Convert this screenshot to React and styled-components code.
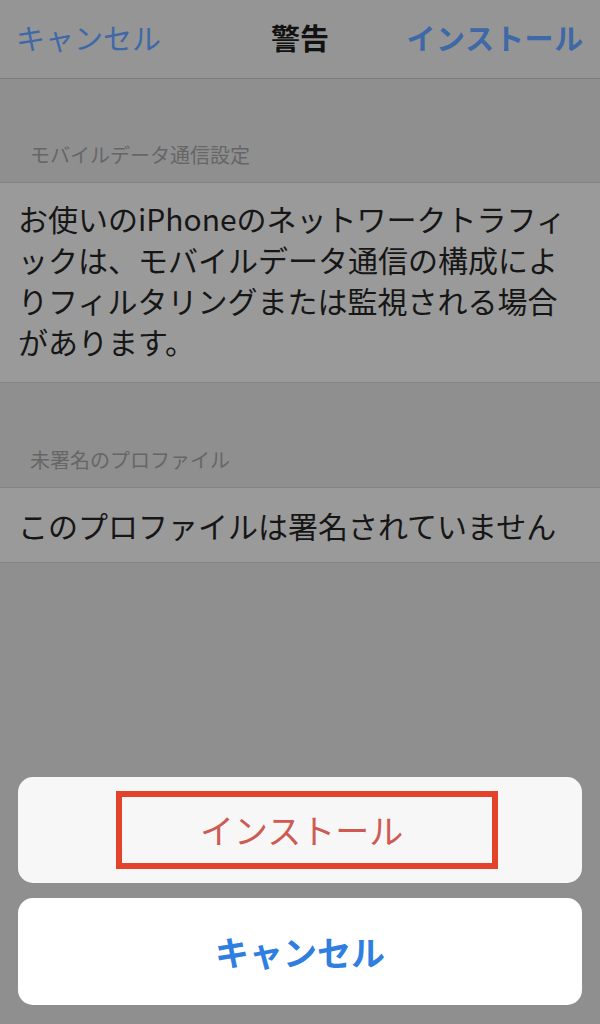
import React from "react";
import styled, { createGlobalStyle } from "styled-components";

const Global = createGlobalStyle`
  html, body { margin: 0; padding: 0; background: #8f8f90; }
  body { font-family: "Noto Sans CJK JP", "Noto Sans", sans-serif; }
  #root { min-height: 1024px; }
`;

const Page = styled.div`
  width: 600px;
  min-height: 1024px;
  display: flex;
  flex-direction: column;
  background: #8f8f90;
`;

const NavBar = styled.header`
  height: 79px;
  box-sizing: border-box;
  display: flex;
  align-items: center;
  justify-content: space-between;
  padding: 0 16px 3px 16px;
  background: #959595;
  border-bottom: 1px solid #7c7c7c;
  position: relative;
`;

const NavButton = styled.span`
  font-size: 29px;
  line-height: 1;
  color: #3f68a6;
  font-weight: ${(p) => (p.$bold ? 700 : 400)};
  letter-spacing: ${(p) => (p.$bold ? "0.7px" : "0")};
`;

const NavTitle = styled.span`
  font-size: 29px;
  line-height: 1;
  font-weight: 700;
  color: #111;
  position: absolute;
  left: 50%;
  transform: translateX(-50%);
`;

const SectionHeader = styled.div`
  padding: ${(p) => p.$top}px 30px ${(p) => p.$bottom}px;
  font-size: 20px;
  line-height: 28px;
  color: #666667;
`;

const Cell = styled.div`
  background: #9a9a9a;
  border-top: 1px solid #848484;
  border-bottom: 1px solid #848484;
  padding: ${(p) => p.$top}px 20px ${(p) => p.$bottom}px 18px;
  font-size: 30px;
  line-height: 41px;
  color: #161616;
`;

const Sheet = styled.div`
  margin-top: auto;
  padding: 0 18px 19px;
  display: flex;
  flex-direction: column;
  gap: 15px;
`;

const SheetButton = styled.div`
  height: ${(p) => p.$h}px;
  border-radius: 15px;
  background: ${(p) => p.$bg};
  display: flex;
  align-items: center;
  justify-content: center;
  font-size: 34px;
  line-height: 1;
  color: ${(p) => p.$color};
  font-weight: ${(p) => (p.$bold ? 700 : 400)};
`;

const Highlight = styled.span`
  display: inline-flex;
  align-items: center;
  box-sizing: border-box;
  width: 382px;
  height: 78px;
  padding: 0 86px 0 78px;
  margin-left: 14px;
  border: 6px solid #e4432b;
`;

export default function App() {
  return (
    <>
      <Global />
      <Page>
        <NavBar>
          <NavButton>キャンセル</NavButton>
          <NavTitle>警告</NavTitle>
          <NavButton $bold>インストール</NavButton>
        </NavBar>
        <SectionHeader $top={62} $bottom={13}>モバイルデータ通信設定</SectionHeader>
        <Cell $top={15} $bottom={20}>
          お使いのiPhoneのネットワークトラフィ
          <br />
          ックは、モバイルデータ通信の構成によ
          <br />
          りフィルタリングまたは監視される場合
          <br />
          があります。
        </Cell>
        <SectionHeader $top={63} $bottom={13}>未署名のプロファイル</SectionHeader>
        <Cell $top={17} $bottom={16}>このプロファイルは署名されていません</Cell>
        <Sheet>
          <SheetButton $h={106} $bg="#f7f7f7" $color="#cf5a52">
            <Highlight>インストール</Highlight>
          </SheetButton>
          <SheetButton $h={107} $bg="#ffffff" $color="#2f7fe0" $bold>
            キャンセル
          </SheetButton>
        </Sheet>
      </Page>
    </>
  );
}
